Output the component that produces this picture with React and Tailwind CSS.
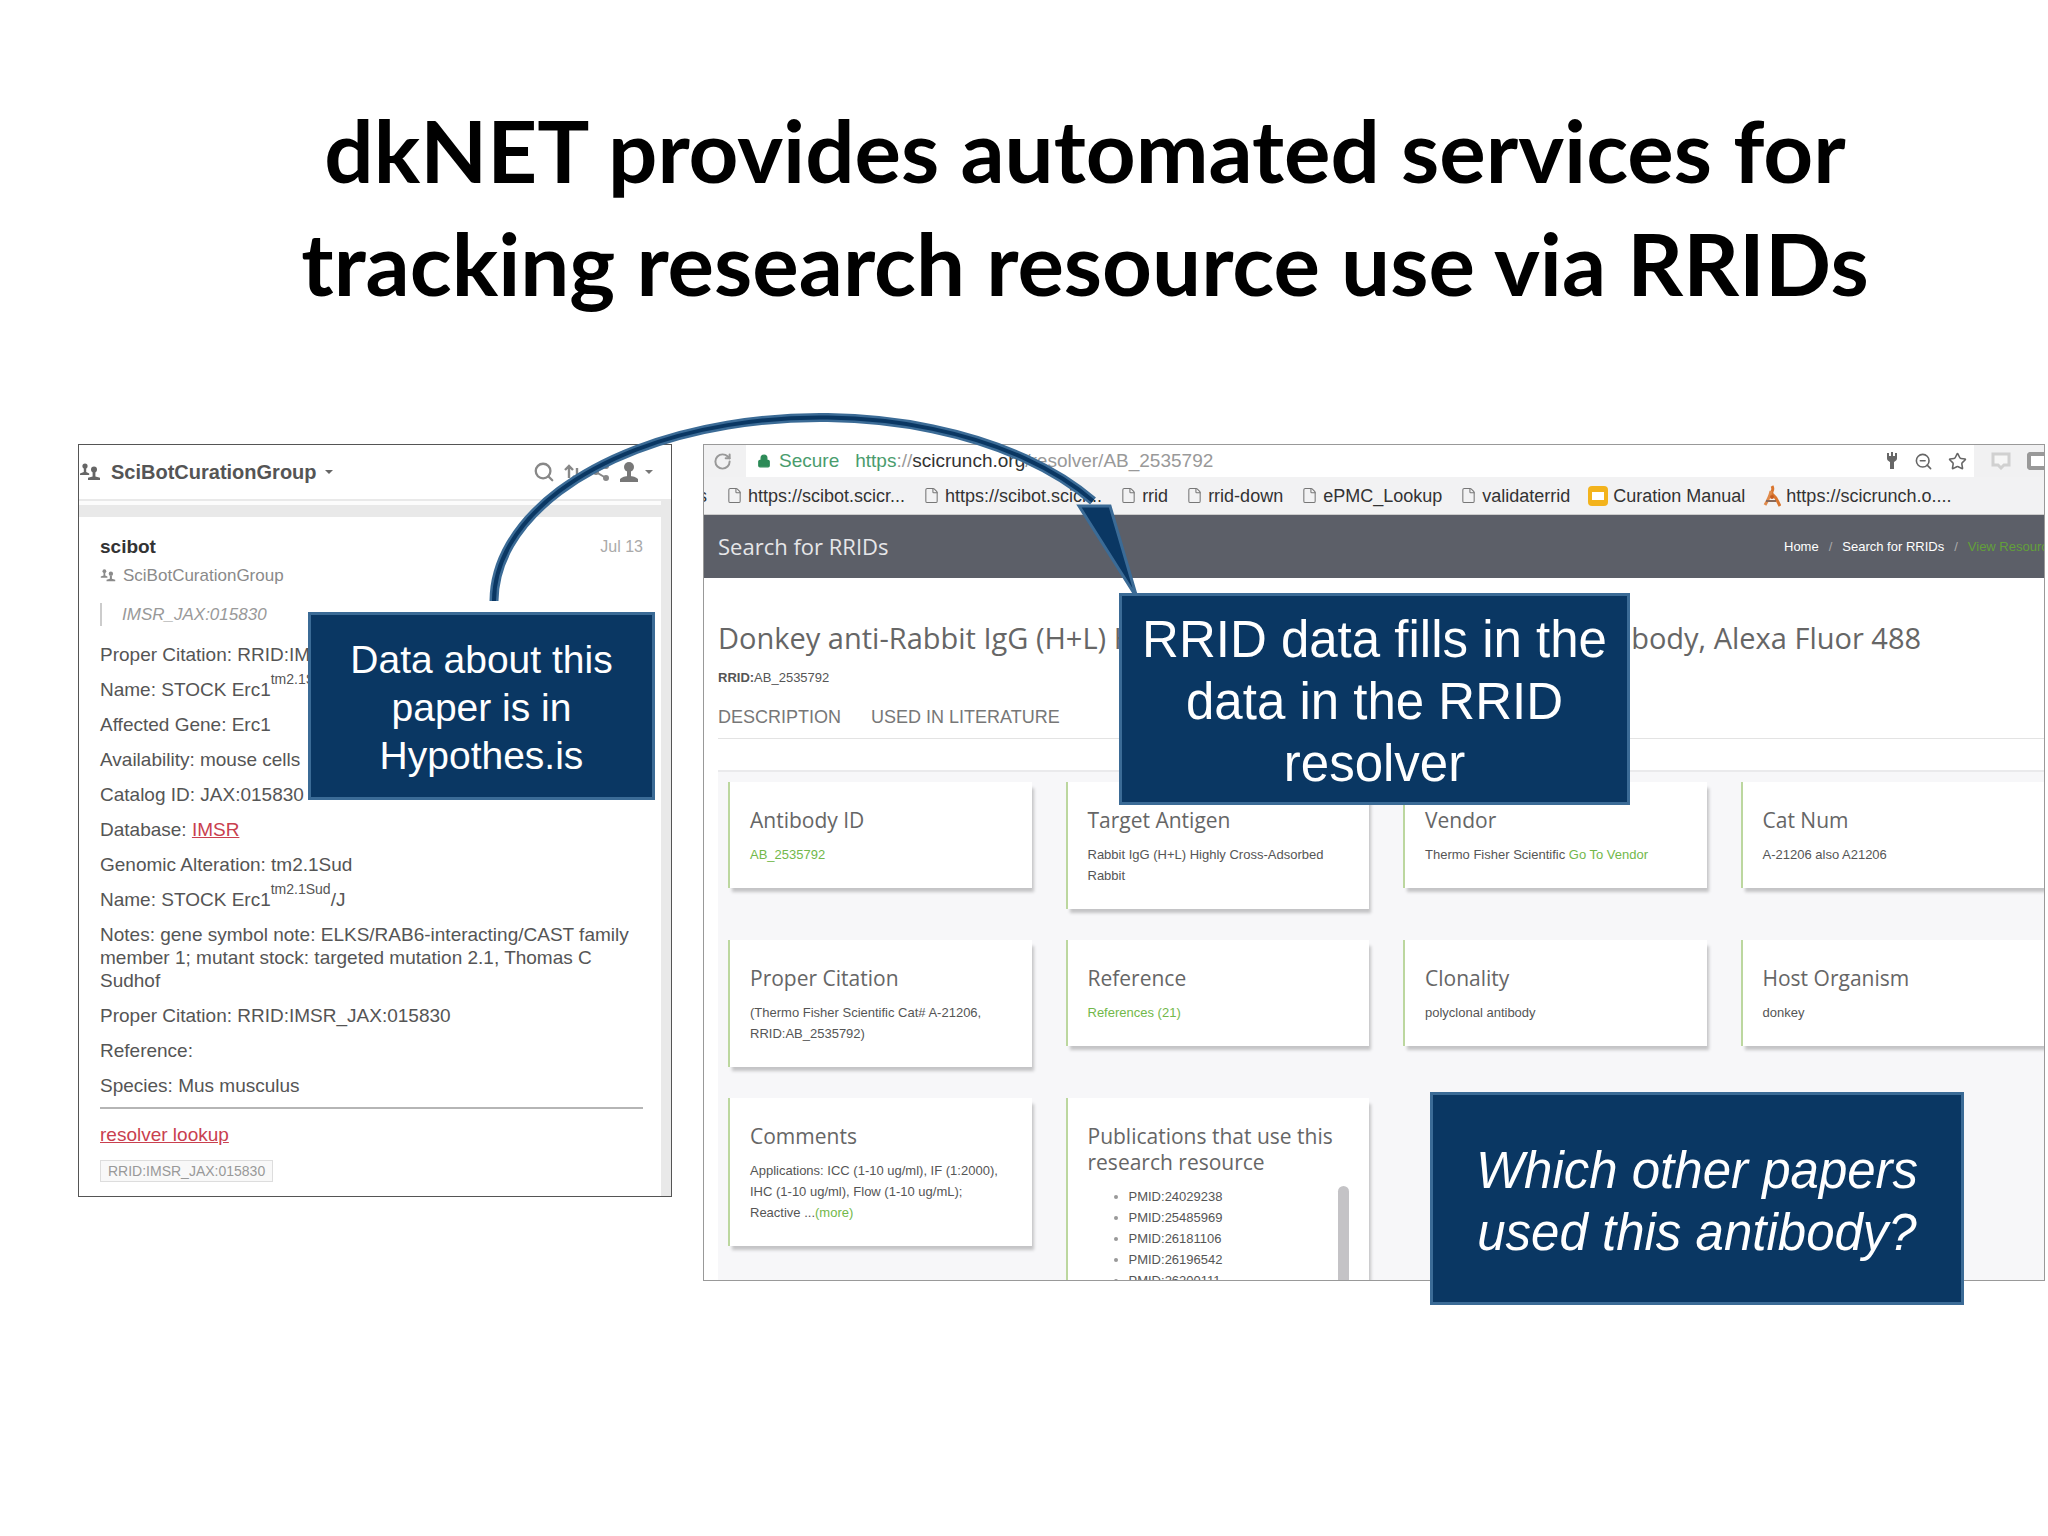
import React from 'react';
import { Search, ZoomOut, Star, File, RotateCw, Lock } from 'lucide-react';

const bookmarks = [
  { label: 'https://scibot.scicr...', icon: 'file' },
  { label: 'https://scibot.scicr...', icon: 'file' },
  { label: 'rrid', icon: 'file' },
  { label: 'rrid-down', icon: 'file' },
  { label: 'ePMC_Lookup', icon: 'file' },
  { label: 'validaterrid', icon: 'file' },
  { label: 'Curation Manual', icon: 'slides' },
  { label: 'https://scicrunch.o....', icon: 'flame' },
];

const pmids = ['24029238', '25485969', '26181106', '26196542', '26200111'];

const GroupIcon = ({ className }) => (
  <svg viewBox="0 0 22 18" className={className} fill="currentColor">
    <circle cx="6" cy="3" r="2.6" />
    <path d="M4.8 5h2.4v4l3 1.4V12H1v-1.6L4.8 9z" />
    <circle cx="15" cy="6.5" r="3" />
    <path d="M13.6 9h2.8v4.4l4.6 1.4V17H9v-2.2l4.6-1.4z" />
  </svg>
);

const SortIcon = () => (
  <svg viewBox="0 0 20 20" className="w-5 h-5" fill="none" stroke="currentColor" strokeWidth="2.4">
    <path d="M6 16V4M2 8l4-4 4 4M14 6v12M10 14l4 4 4-4" />
  </svg>
);

const ShareIcon = () => (
  <svg viewBox="0 0 20 20" className="w-5 h-5" fill="currentColor" stroke="currentColor" strokeWidth="2">
    <path d="M15 4L5 10l10 6" fill="none" />
    <circle cx="15" cy="4" r="2" />
    <circle cx="5" cy="10" r="2" />
    <circle cx="15" cy="16" r="2" />
  </svg>
);

const UserIcon = () => (
  <svg viewBox="0 0 20 22" className="w-5 h-[22px]" fill="currentColor">
    <circle cx="10" cy="6" r="5" />
    <path d="M8 9h4v7h-4z" />
    <path d="M1 21v-3c2-2 5-3 9-3s7 1 9 3v3z" />
  </svg>
);

const BookmarkIcon = ({ type }) => {
  if (type === 'slides') {
    return (
      <span className="w-5 h-5 rounded-sm bg-[#f3b31c] flex items-center justify-center">
        <span className="w-3 h-2 bg-white" />
      </span>
    );
  }
  if (type === 'flame') {
    return (
      <svg viewBox="0 0 18 22" className="w-[18px] h-[22px]" fill="none">
        <path d="M9 1c3 5-3 6 1 9s4 6 7 11" stroke="#d9752e" strokeWidth="3" />
        <path d="M8 6c-1 5-3 9-6 14" stroke="#e08a4a" strokeWidth="3" />
        <path d="M3 16h10" stroke="#8a6a5a" strokeWidth="2" />
        <circle cx="9" cy="12" r="2" fill="#c65d20" />
      </svg>
    );
  }
  return <File size={17} strokeWidth={1.5} className="text-[#777]" />;
};

const AnnotationPanel = () => (
  <div className="w-[594px] h-[753px] shrink-0 border border-[#555] bg-[#e9e9e9] text-[19px] leading-[23px] text-[#555] overflow-hidden">
    <div className="h-[54px] bg-white flex items-center pr-[18px]">
      <GroupIcon className="w-[22px] h-[18px] text-[#666]" />
      <button className="ml-2.5 flex items-center gap-2 text-xl font-bold text-[#555]">
        SciBotCurationGroup
        <span className="border-x-4 border-t-4 border-x-transparent border-t-[#666]" />
      </button>
      <div className="ml-auto flex items-center gap-2 text-[#888]">
        <button aria-label="Search"><Search size={22} strokeWidth={2.5} /></button>
        <button aria-label="Sort"><SortIcon /></button>
        <button aria-label="Share"><ShareIcon /></button>
        <button aria-label="Account" className="flex items-center gap-1.5 text-[#777]">
          <UserIcon />
          <span className="border-x-4 border-t-4 border-x-transparent border-t-[#777]" />
        </button>
      </div>
    </div>
    <div className="mt-[2px] mr-2.5 h-1 bg-[#fcfcfc]" />

    <article className="mt-3 mr-2.5 h-[690px] bg-white pl-[21px] pr-[18px] pt-[18px]">
      <header className="flex justify-between">
        <span className="font-bold text-[#333]">scibot</span>
        <time className="text-base leading-[23px] text-[#aaa]">Jul 13</time>
      </header>
      <div className="mt-1.5 flex items-center gap-[7px] text-[17px] text-[#8a8a8a]">
        <GroupIcon className="w-4 h-[13px]" />
        SciBotCurationGroup
      </div>
      <blockquote className="mt-4 border-l-2 border-[#ccc] pl-5 text-[17px] italic text-[#999]">
        IMSR_JAX:015830
      </blockquote>
      <div className="mt-[17px] space-y-3">
        <p>Proper Citation: RRID:IMSR_JAX:015830</p>
        <p>Name: STOCK Erc1<sup className="text-sm leading-none -top-3">tm2.1Sud</sup>/J</p>
        <p>Affected Gene: Erc1</p>
        <p>Availability: mouse cells</p>
        <p>Catalog ID: JAX:015830</p>
        <p>Database: <a href="#imsr" className="text-[#c9404f] underline">IMSR</a></p>
        <p>Genomic Alteration: tm2.1Sud</p>
        <p>Name: STOCK Erc1<sup className="text-sm leading-none -top-3">tm2.1Sud</sup>/J</p>
        <p>Notes: gene symbol note: ELKS/RAB6-interacting/CAST family member 1; mutant stock: targeted mutation 2.1, Thomas C Sudhof</p>
        <p>Proper Citation: RRID:IMSR_JAX:015830</p>
        <p>Reference:</p>
        <p>Species: Mus musculus</p>
      </div>
      <hr className="mt-2.5 border-t-2 border-[#b5b5b5]" />
      <a href="#lookup" className="mt-3.5 block text-[#c9404f] underline">resolver lookup</a>
      <span className="mt-3.5 inline-block border border-[#ddd] bg-[#f8f8f8] px-[7px] text-sm leading-5 text-[#999]">
        RRID:IMSR_JAX:015830
      </span>
    </article>
  </div>
);

const Card = ({ title, children }) => (
  <section className="min-w-0 border-l-2 border-[#bcd79f] bg-white pl-5 pr-5 pt-[25px] pb-[23px] shadow-[3px_5px_3px_-1px_#c4c4c6]">
    <h3 className="font-['Open_Sans',sans-serif] text-[21px] leading-[26px] text-[#666]">{title}</h3>
    <div className="mt-[11px] text-[13px] leading-[21px] text-[#555]">{children}</div>
  </section>
);

const GreenLink = ({ href, children }) => (
  <a href={href} className="text-[#72b84a]">{children}</a>
);

const ResolverPanel = () => (
  <div className="flex-1 min-w-0 h-[837px] border border-[#999] bg-white overflow-hidden">
    <div className="h-8 flex bg-[#f1f1f2]">
      <button aria-label="Reload" className="w-[42px] flex items-center justify-center pr-1.5 text-[#999]">
        <RotateCw size={19} strokeWidth={2.5} />
      </button>
      <div className="flex-1 flex items-center bg-white pl-[11px] pr-[7px] text-[19px]">
        <Lock size={14} fill="#2c8a57" className="text-[#2c8a57]" />
        <span className="ml-2 text-[#4a9c6d]">Secure</span>
        <span className="ml-4 text-[#999]">
          <span className="text-[#4a9c6d]">https</span>://<span className="text-[#333]">scicrunch.org</span>/resolver/AB_2535792
        </span>
        <div className="ml-auto flex items-center gap-[15px] text-[#666]">
          <svg viewBox="0 0 14 20" className="w-3.5 h-5" fill="currentColor">
            <path d="M2 2h2v3h2V1h2v4h2V2h2v5c0 3-2 3-3 4v7H5v-7C4 10 2 10 2 7z" />
          </svg>
          <ZoomOut size={19} />
          <Star size={19} />
        </div>
      </div>
      <div className="w-[70px] flex items-center justify-between pl-[17px] overflow-hidden">
        <svg viewBox="0 0 20 18" className="w-5 h-[18px] shrink-0" fill="#f6f6f6" stroke="#d0d0d0" strokeWidth="3">
          <path d="M2 2h16v11h-5l-3 3-3-3H2z" />
        </svg>
        <span className="w-[17px] h-[18px] rounded-l border-4 border-r-0 border-[#999] bg-white" />
      </div>
    </div>

    <nav className="h-[38px] flex items-center border-b border-[#ccc] bg-[#f2f2f3] text-lg text-[#333] whitespace-nowrap">
      <span className="w-[22px] -indent-1.5">s</span>
      <div className="flex items-center gap-[18px]">
        {bookmarks.map((item, index) => (
          <a key={index} href={`#bookmark-${index}`} className="flex items-center gap-[5px]">
            <BookmarkIcon type={item.icon} />
            {item.label}
          </a>
        ))}
      </div>
    </nav>

    <div className="h-[63px] flex items-center justify-between bg-[#5c5f68] pl-3.5 text-white whitespace-nowrap">
      <h2 className="font-['Open_Sans',sans-serif] text-[22px] text-[#e6e6e8]">Search for RRIDs</h2>
      <div className="w-[260px] shrink-0 flex gap-2.5 text-[13px]">
        <a href="#home">Home</a>
        <span className="text-[#aaa]">/</span>
        <a href="#search">Search for RRIDs</a>
        <span className="text-[#aaa]">/</span>
        <a href="#resource" className="text-[#63a03a]">View Resource</a>
      </div>
    </div>

    <div className="pl-3.5 pt-10 whitespace-nowrap">
      <h1 className="font-['Open_Sans',sans-serif] text-[29px] leading-10 text-[#666]">
        Donkey anti-Rabbit IgG (H+L) Highly Cross-Adsorbed Secondary Antibody, Alexa Fluor 488
      </h1>
      <p className="mt-2.5 text-[13px] leading-5 text-[#555]"><b>RRID:</b>AB_2535792</p>
      <div className="mt-4 flex gap-[30px] border-b border-[#e3e3e3] pb-2 text-lg leading-[26px] text-[#777]">
        <a href="#description">DESCRIPTION</a>
        <a href="#literature">USED IN LITERATURE</a>
      </div>
    </div>

    <div className="ml-3.5 mt-[31px] h-[520px] border-t-2 border-[#eaeaec] bg-[#f7f7f9] pl-2.5 pt-2.5">
      <div className="grid grid-cols-4 items-start gap-x-[34px] gap-y-[31px]">
        <Card title="Antibody ID"><GreenLink href="#id">AB_2535792</GreenLink></Card>
        <Card title="Target Antigen">Rabbit IgG (H+L) Highly Cross-Adsorbed Rabbit</Card>
        <Card title="Vendor">Thermo Fisher Scientific <GreenLink href="#vendor">Go To Vendor</GreenLink></Card>
        <Card title="Cat Num">A-21206 also A21206</Card>
        <Card title="Proper Citation">(Thermo Fisher Scientific Cat# A-21206, RRID:AB_2535792)</Card>
        <Card title="Reference"><GreenLink href="#references">References (21)</GreenLink></Card>
        <Card title="Clonality">polyclonal antibody</Card>
        <Card title="Host Organism">donkey</Card>
        <Card title="Comments">
          Applications: ICC (1-10 ug/ml), IF (1:2000), IHC (1-10 ug/ml), Flow (1-10 ug/mL); Reactive ...<GreenLink href="#more">(more)</GreenLink>
        </Card>
        <Card title="Publications that use this research resource">
          <div className="flex justify-between">
            <ul className="list-disc pl-[41px] marker:text-[#999]">
              {pmids.map((id) => (
                <li key={id}>PMID:{id}</li>
              ))}
            </ul>
            <span className="w-[11px] rounded-full bg-[#c4c3c6]" />
          </div>
        </Card>
      </div>
    </div>
  </div>
);

const Arrow = () => (
  <svg viewBox="0 0 660 200" className="absolute left-[486px] -top-9 w-[660px] h-[200px]" fill="none">
    <path d="M8 193A326 184 0 0 1 607 93" stroke="#3b6b96" strokeWidth="9" />
    <path d="M8 193A326 184 0 0 1 607 93" stroke="#0a3763" strokeWidth="4" />
    <path d="M593 98h31L651 190z" fill="#0a3763" stroke="#3b6b96" strokeWidth="3" />
  </svg>
);

export default function App() {
  return (
    <main className="min-h-screen bg-white font-['Liberation_Sans',sans-serif] overflow-x-hidden">
      <h1 className="pt-[93px] pl-[122px] text-center font-['Lato',sans-serif] text-[87px] leading-[113px] font-bold text-black">
        dkNET provides automated services for<br />
        tracking research resource use via RRIDs
      </h1>

      <div className="relative mt-[125px] flex items-start gap-[31px] pl-[78px] pr-[3px]">
        <AnnotationPanel />
        <ResolverPanel />
        <Arrow />

        <div className="absolute left-[308px] top-[168px] w-[347px] h-[188px] flex items-center justify-center border-[3px] border-[#3b6b96] bg-[#0a3763] px-6 pt-1 text-center text-[39px] leading-[48px] text-white">
          Data about this paper is in Hypothes.is
        </div>
        <div className="absolute left-[1119px] top-[149px] w-[511px] h-[212px] flex items-center justify-center border-[3px] border-[#3b6b96] bg-[#0a3763] px-4 pt-1.5 text-center text-[51px] leading-[62px] text-white">
          RRID data fills in the data in the RRID resolver
        </div>
        <div className="absolute left-[1430px] top-[648px] w-[534px] h-[213px] flex items-center justify-center border-[3px] border-[#3b6b96] bg-[#0a3763] px-10 pt-1.5 text-center text-[51px] leading-[62px] italic text-white">
          Which other papers used this antibody?
        </div>
      </div>
    </main>
  );
}
